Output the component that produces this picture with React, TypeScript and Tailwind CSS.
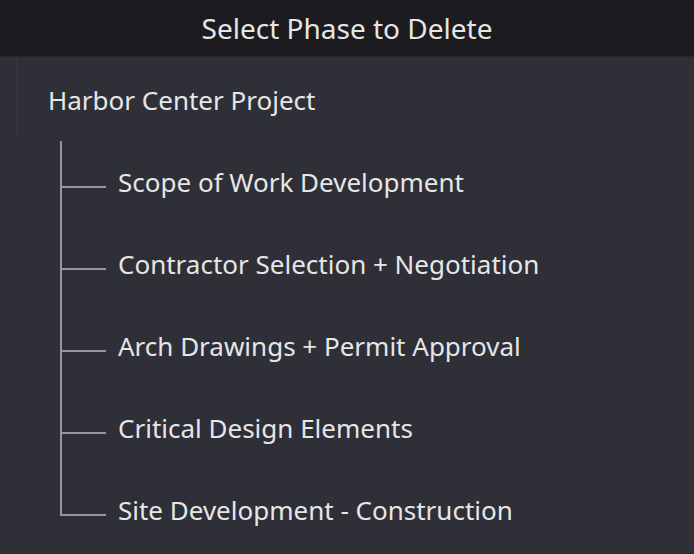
const phases = [
  'Scope of Work Development',
  'Contractor Selection + Negotiation',
  'Arch Drawings + Permit Approval',
  'Critical Design Elements',
  'Site Development - Construction',
];

export default function App() {
  return (
    <div
      className="w-[694px] h-[554px] bg-[#2f2f38] text-[#e6e6e6] flex flex-col overflow-hidden"
      style={{ fontFamily: '"Noto Sans", "Open Sans", sans-serif' }}
    >
      {/* Header */}
      <div className="h-[57px] shrink-0 bg-[#1b1b20] border-b border-[#26262c] flex items-center justify-center">
        <span className="text-[28px] leading-none -mt-[1px]">Select Phase to Delete</span>
      </div>

      {/* Project root */}
      <div className="h-[84px] shrink-0 ml-[16px] border-l border-[#36363f] pl-[31px] flex items-center pt-[2px]">
        <span className="text-[26px] leading-none">Harbor Center Project</span>
      </div>

      {/* Phase tree */}
      <div className="pl-[60px] flex flex-col">
        {phases.map((phase, i) => {
          const last = i === phases.length - 1;
          return (
            <div key={phase} className="h-[82px] flex">
              <div className="w-[46px] flex flex-col shrink-0">
                <div className="h-[47px] border-l-2 border-b-2 border-[#96969c]" />
                {!last && <div className="flex-1 border-l-2 border-[#96969c]" />}
              </div>
              <div className="pl-[12px] flex items-center">
                <span className="text-[26px] leading-none whitespace-nowrap">{phase}</span>
              </div>
            </div>
          );
        })}
      </div>
    </div>
  );
}
